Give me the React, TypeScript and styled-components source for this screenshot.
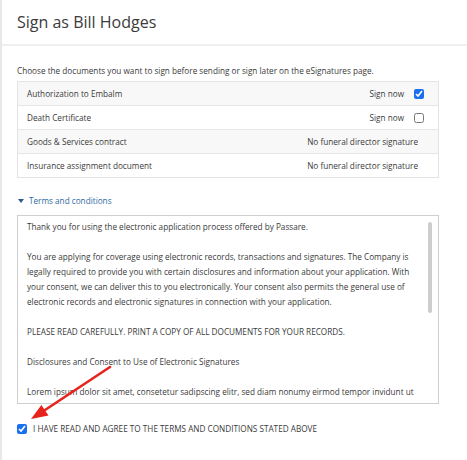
import styled, { createGlobalStyle } from "styled-components";

const GlobalStyle = createGlobalStyle`
    html, body {
        margin: 0;
        padding: 0;
        background: #fff;
    }
    body {
        font-family: "Open Sans", "Liberation Sans", sans-serif;
        color: #3a3a3a;
    }
`;

const Page = styled.div`
    position: relative;
    width: 467px;
    height: 460px;
    box-sizing: border-box;
    border-left: 2px solid #e8e8e8;
    overflow: hidden;
`;

const Header = styled.header`
    height: 44px;
    display: flex;
    align-items: center;
    padding-left: 15px;
    border-bottom: 2px solid #efefef;
`;

const Title = styled.h1`
    margin: 0;
    font-size: 16px;
    font-weight: 400;
    color: #3c3c3c;
`;

const Body = styled.div`
    padding: 19px 28px 0 15px;
`;

const Intro = styled.p`
    margin: 0 0 4px;
    font-size: 8.2px;
    line-height: 12px;
`;

const DocTable = styled.div`
    border: 1px solid #e4e4e4;
`;

const DocRow = styled.div<{ $striped: boolean }>`
    height: 23px;
    display: flex;
    align-items: center;
    justify-content: space-between;
    padding: 0 14px 0 9px;
    font-size: 8.2px;
    background: ${p => (p.$striped ? "#f8f8f8" : "#fff")};
    & + & {
        border-top: 1px solid #e6e6e6;
    }
`;

const RightCell = styled.div<{ $plain?: boolean }>`
    display: flex;
    align-items: center;
    gap: 10px;
    padding-right: ${p => (p.$plain ? "6px" : "0")};
`;

const Check = styled.input`
    flex: none;
    width: 10px;
    height: 10px;
    margin: 0;
    accent-color: #1a6ff0;
`;

const Toggle = styled.div`
    margin-top: 17px;
    display: flex;
    align-items: center;
    gap: 5px;
    padding-left: 1px;
    font-size: 8.2px;
    line-height: 12px;
    color: #2e6aa3;
`;

const Caret = styled.span`
    width: 0;
    height: 0;
    border-left: 3px solid transparent;
    border-right: 3px solid transparent;
    border-top: 4px solid #2c5c8c;
`;

const TermsBox = styled.div`
    position: relative;
    margin-top: 8px;
    height: 189px;
    box-sizing: border-box;
    border: 1px solid #cfcfcf;
    padding: 3px 20px 0 9px;
    overflow: hidden;
    font-size: 8.2px;
    line-height: 15px;
`;

const Para = styled.p`
    margin: 0 0 15px;
    &:last-of-type {
        margin-bottom: 0;
    }
`;

const Thumb = styled.div`
    position: absolute;
    top: 6px;
    right: 6px;
    width: 4px;
    height: 91px;
    border-radius: 2px;
    background: #cdcdcd;
`;

const Agree = styled.label`
    margin-top: 19px;
    display: flex;
    align-items: center;
    gap: 6px;
    font-size: 8.2px;
    line-height: 12px;
    color: #3a3a3a;
`;

const Arrow = styled.svg`
    position: absolute;
    left: 0;
    top: 0;
    pointer-events: none;
`;

interface IDoc {
    name: string;
    signable: boolean;
    checked?: boolean;
}

const docs: IDoc[] = [
    { name: "Authorization to Embalm", signable: true, checked: true },
    { name: "Death Certificate", signable: true, checked: false },
    { name: "Goods & Services contract", signable: false },
    { name: "Insurance assignment document", signable: false },
];

function App() {
    return (
        <Page>
            <GlobalStyle />
            <Header>
                <Title>Sign as Bill Hodges</Title>
            </Header>
            <Body>
                <Intro>Choose the documents you want to sign before sending or sign later on the eSignatures page.</Intro>
                <DocTable>
                    {docs.map((doc, i) => (
                        <DocRow key={doc.name} $striped={i % 2 === 0}>
                            <span>{doc.name}</span>
                            {doc.signable ? (
                                <RightCell>
                                    Sign now
                                    <Check type="checkbox" defaultChecked={doc.checked} />
                                </RightCell>
                            ) : (
                                <RightCell $plain>No funeral director signature</RightCell>
                            )}
                        </DocRow>
                    ))}
                </DocTable>
                <Toggle>
                    <Caret />
                    Terms and conditions
                </Toggle>
                <TermsBox>
                    <Para>Thank you for using the electronic application process offered by Passare.</Para>
                    <Para>
                        You are applying for coverage using electronic records, transactions and signatures. The Company is
                        legally required to provide you with certain disclosures and information about your application. With
                        your consent, we can deliver this to you electronically. Your consent also permits the general use of
                        electronic records and electronic signatures in connection with your application.
                    </Para>
                    <Para>PLEASE READ CAREFULLY. PRINT A COPY OF ALL DOCUMENTS FOR YOUR RECORDS.</Para>
                    <Para>Disclosures and Consent to Use of Electronic Signatures</Para>
                    <Para>
                        Lorem ipsum dolor sit amet, consetetur sadipscing elitr, sed diam nonumy eirmod tempor invidunt ut
                    </Para>
                    <Thumb />
                </TermsBox>
                <Agree>
                    <Check type="checkbox" defaultChecked />
                    <span>I HAVE READ AND AGREE TO THE TERMS AND CONDITIONS STATED ABOVE</span>
                </Agree>
            </Body>
            <Arrow width="467" height="460" viewBox="0 0 467 460">
                <line x1="108" y1="367" x2="40" y2="412" stroke="#e8221c" strokeWidth="2.6" strokeLinecap="round" />
                <polygon points="29,419 39.4,405 46.5,415.5" fill="#e8221c" />
            </Arrow>
        </Page>
    );
}

export default App;
